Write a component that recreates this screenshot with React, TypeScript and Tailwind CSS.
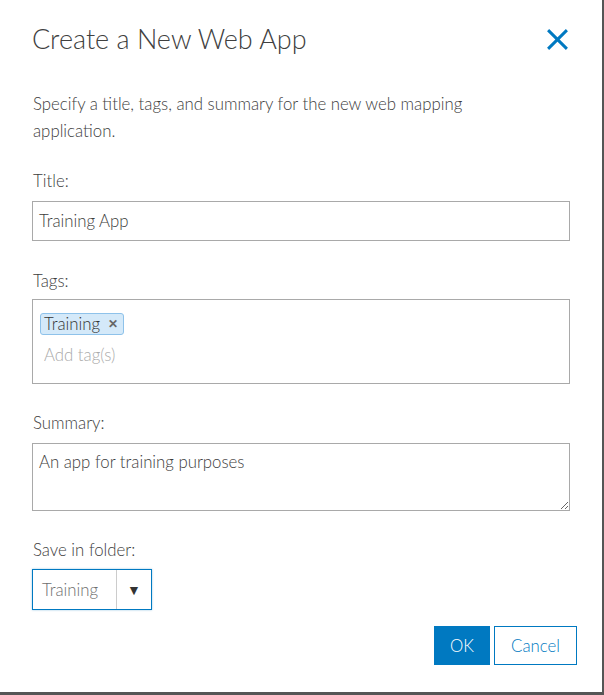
import React from "react";

export default function App() {
  const font = { fontFamily: '"Lato", "Open Sans", sans-serif' };
  return (
    <div className="w-[604px] h-[695px] bg-white border-r-2 border-b-[3px] border-[#555555] text-[#3d3d3d] font-light" style={font}>
      <div className="flex items-center justify-between pt-[22px] pl-[32px] pr-[33px]">
        <div className="text-[27px] leading-[34px] font-light text-[#404040]">Create a New Web App</div>
        <svg width="23" height="23" viewBox="0 0 22 22" className="text-[#0079c1]">
          <path d="M2 2 L20 20 M20 2 L2 20" stroke="currentColor" strokeWidth="2.8" fill="none" />
        </svg>
      </div>

      <div className="pl-[33px] pr-[32px]">
        <p className="mt-[34px] text-[16.8px] leading-[27px]">
          Specify a title, tags, and summary for the new web mapping
          <br />
          application.
        </p>

        <div className="mt-[25px] text-[16.8px] leading-[24px]">Title:</div>
        <div className="mt-[8px] -ml-px h-[40px] w-[538px] border border-[#a9a9a9] flex items-center px-[6px] text-[16.8px]">
          Training App
        </div>

        <div className="mt-[28px] text-[16.8px] leading-[24px]">Tags:</div>
        <div className="mt-[6px] -ml-px h-[85px] w-[538px] border border-[#a9a9a9] px-[7px] pt-[12px]">
          <span className="inline-flex items-center h-[22px] pl-[3px] pr-[5px] rounded-[3px] border border-[#8ec2ea] bg-[#d4e9f9] text-[16.8px] leading-[20px] text-[#333]">
            Training
            <span className="ml-[8px] text-[12px] font-bold text-[#666]">✕</span>
          </span>
          <div className="mt-[9px] pl-[4px] text-[16.8px] leading-[20px] text-[#aaaaaa]">Add tag(s)</div>
        </div>

        <div className="mt-[27px] text-[16.8px] leading-[24px]">Summary:</div>
        <textarea
          readOnly
          defaultValue="An app for training purposes"
          className="block mt-[8px] -ml-px h-[68px] w-[538px] border border-[#a9a9a9] px-[6px] pt-[7px] text-[16.8px] leading-[22px] text-[#3d3d3d] font-light outline-none resize-y"
          style={font}
        />

        <div className="mt-[27px] text-[16.8px] leading-[24px]">Save in folder:</div>
        <div className="mt-[7px] -ml-px h-[41px] w-[120px] border border-[#0079c1] flex shadow-[0_0_2px_rgba(0,121,193,0.4)]">
          <div className="flex-1 flex items-center pl-[9px] text-[16.8px] text-[#6e6e6e] border-r border-[#cccccc]">Training</div>
          <div className="w-[34px] flex items-center justify-center text-[14px] text-[#333]">▼</div>
        </div>

        <div className="mt-[16px] flex justify-end gap-[4px] mr-[-7px]">
          <button className="h-[39px] w-[56px] bg-[#0079c1] text-white text-[16.8px] font-light" style={font}>OK</button>
          <button className="h-[39px] w-[83px] border border-[#0079c1] bg-white text-[#0079c1] text-[16.8px] font-light" style={font}>Cancel</button>
        </div>
      </div>
    </div>
  );
}
